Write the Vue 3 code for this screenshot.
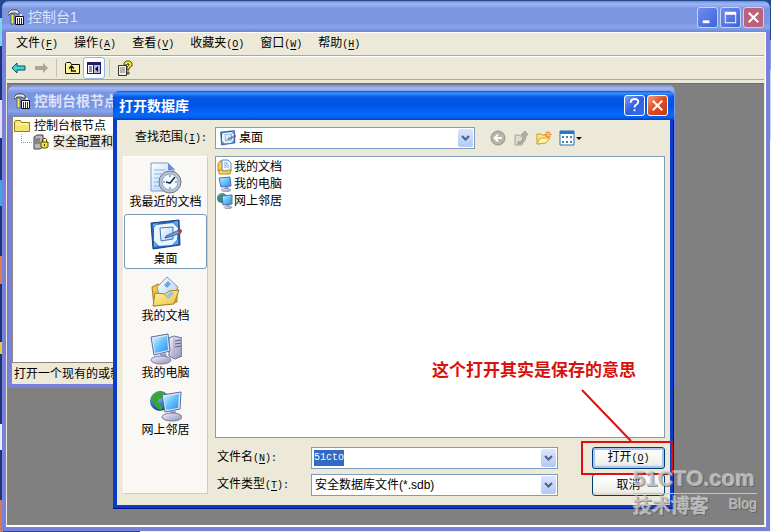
<template>
  <div class="desktop">
    <svg class="defs" aria-hidden="true">
      <defs>
        <linearGradient id="g-screen" x1="0" y1="0" x2="1" y2="1">
          <stop offset="0" stop-color="#d2f3ff" />
          <stop offset="0.5" stop-color="#62c2fb" />
          <stop offset="1" stop-color="#2f8ce8" />
        </linearGradient>
        <linearGradient id="g-folder" x1="0" y1="0" x2="1" y2="1">
          <stop offset="0" stop-color="#fff6a8" />
          <stop offset="1" stop-color="#efbf3a" />
        </linearGradient>
        <linearGradient id="g-metal" x1="0" y1="0" x2="1" y2="1">
          <stop offset="0" stop-color="#f6f6fc" />
          <stop offset="1" stop-color="#8c8cb8" />
        </linearGradient>
        <linearGradient id="g-paper" x1="0" y1="0" x2="1" y2="1">
          <stop offset="0" stop-color="#ffffff" />
          <stop offset="1" stop-color="#a9cdf5" />
        </linearGradient>
        <radialGradient id="g-globe" cx="0.4" cy="0.3" r="0.7">
          <stop offset="0" stop-color="#7fc4ff" />
          <stop offset="1" stop-color="#10409c" />
        </radialGradient>
      </defs>

      <symbol id="i-console" viewBox="0 0 16 16">
        <path d="M0 4 3 1h6l2 2v2H9L8 4H3L1 6H0z" fill="#e4e4e4" stroke="#222" stroke-width="0.7" />
        <path d="M3 5h3v10H3z" fill="#f4e84a" stroke="#444" stroke-width="0.7" />
        <path d="M7.500 7.500h8v8h-8z" fill="#fff" stroke="#111" />
        <path d="M9 15V9h1v6zM11 15V9h1v6zM13 15V9h1v6z" fill="#5a1430" />
        <path d="M12 5h2v2h-2z" fill="#e8e8e8" />
      </symbol>

      <symbol id="i-docs" viewBox="0 0 16 16">
        <path d="M1 5 3 2h4v12H3L1 12z" fill="#f5cf5c" stroke="#b98518" />
        <path d="M5 1h6l3 3v8H5z" fill="#f4faff" stroke="#5586bd" />
        <path d="M7 4h4M7 6h5M7 8h5" stroke="#7fa9d8" fill="none" />
        <path d="M2 15v-4h3v1h6v-1h3l-1 4z" fill="url(#g-folder)" stroke="#b98518" />
      </symbol>

      <symbol id="i-pc" viewBox="0 0 16 16">
        <path d="m2 2 11-1 1 9-10 1z" fill="url(#g-screen)" stroke="#4a6fa8" />
        <path d="M8 11h3l1 2H7z" fill="#9a9ac4" />
        <ellipse cx="9" cy="14" rx="5" ry="1.6" fill="url(#g-metal)" stroke="#8585a8" stroke-width="0.6" />
      </symbol>

      <symbol id="i-net" viewBox="0 0 16 16">
        <circle cx="5" cy="5" r="5" fill="url(#g-globe)" />
        <path d="M1 5c1-3 4-4 5-4l1 3-3 2 1 3H3z" fill="#2fa040" />
        <path d="m5 3 10-1v9l-9 1z" fill="url(#g-screen)" stroke="#4a6fa8" />
        <path d="M10 12h2l1 1H9z" fill="#9a9ac4" />
        <ellipse cx="11" cy="14.3" rx="4" ry="1.4" fill="url(#g-metal)" stroke="#8585a8" stroke-width="0.6" />
      </symbol>

      <symbol id="i-desk" viewBox="0 0 32 32">
        <path d="m1 4 28-3 1 25-27 4z" fill="#2c66b8" stroke="#1c3f80" />
        <path d="m6 6 17-2 5 5-1 12-5 5-13 1-5-5V9z" fill="#e6f7fb" />
        <path d="m23 3 5-1v6zM3 9V5l5-1zM28 20v5l-6 1zM4 22l4 5-4 1z" fill="#5ca8f0" />
        <path d="m10 9 13-1v12l-12 2z" fill="url(#g-paper)" stroke="#3f78bb" />
        <path d="m16 17 13-6 2 3-12 4-4 1z" fill="#6fa4dd" stroke="#234f8e" stroke-width="0.8" />
        <circle cx="30" cy="12" r="2" fill="#c93a24" />
      </symbol>

      <symbol id="i-recent" viewBox="0 0 32 32">
        <path d="M1 1h17l6 6v22H1z" fill="url(#g-paper)" stroke="#7b9cc8" />
        <path d="M18 1v7h6z" fill="#5c92da" />
        <path d="M4 8h11M4 12h8M4 16h6M4 20h5M4 24h6" stroke="#8ab4e4" fill="none" />
        <circle cx="20" cy="20" r="11" fill="#b9c3d3" stroke="#6d7788" />
        <circle cx="20" cy="20" r="8" fill="#eefaff" stroke="#8fa6c0" />
        <path d="M20 13v2M20 25v2M13 20h2M25 20h2" stroke="#4b6480" />
        <path d="m25 15-5 6-4-1" fill="none" stroke="#1c2f4c" stroke-width="1.6" />
      </symbol>

      <symbol id="i-folder" viewBox="0 0 32 32">
        <path d="m2 11 6-3 5 3 14 1v14L4 30z" fill="#f2c646" stroke="#a97f1e" />
        <path d="M7 11 17 1l11 10-6 14-12-2z" fill="url(#g-paper)" stroke="#6f9ccc" />
        <path d="m14 9 4-4 3 3-4 4z" fill="#3f86cf" opacity="0.7" />
        <path d="m3 30 2-13 10 1 4-3 10-1-5 14z" fill="url(#g-folder)" stroke="#a97f1e" />
        <path d="m14 19 4 4 6-5-3-3-4 4z" fill="#82bdf0" opacity="0.8" />
      </symbol>

      <symbol id="i-computer" viewBox="0 0 32 32">
        <path d="m19 5 5-2 8 2v18l-7 3-6-3z" fill="url(#g-metal)" stroke="#6a6a98" />
        <path d="m25 8 6-1M25 11l6-1M25 14l6-1" stroke="#59598c" fill="none" />
        <path d="M24 5v20" stroke="#a6a6cc" fill="none" />
        <path d="m1 4 17-3 2 17-16 4z" fill="#dfe6f6" stroke="#5b6f9e" />
        <path d="m3 6 14-3 1 14-13 3z" fill="url(#g-screen)" />
        <path d="m10 21 6-1 1 5h-6z" fill="#9c9cc6" />
        <ellipse cx="11" cy="27" rx="10" ry="4" fill="url(#g-metal)" stroke="#7c7ca6" />
      </symbol>

      <symbol id="i-network" viewBox="0 0 32 32">
        <circle cx="10" cy="11" r="10" fill="url(#g-globe)" />
        <path d="M1 9c2-5 6-8 10-8l4 2-3 5-4 2 1 4 4 2-2 5-5-4z" fill="#35a832" />
        <path d="m12 5 19-3-1 17-15 3z" fill="#dfe6f6" stroke="#5b6f9e" />
        <path d="m14 7 15-3-1 14-12 2z" fill="url(#g-screen)" />
        <path d="m20 21 5-1 2 5h-7z" fill="#9c9cc6" />
        <ellipse cx="22" cy="27" rx="10" ry="4" fill="url(#g-metal)" stroke="#7c7ca6" />
      </symbol>
    </svg>

    <section class="window">
      <header class="title title--main">
        <svg class="ico16"><use href="#i-console" /></svg>
        <h1>控制台1</h1>
        <div class="caption">
          <button class="cap cap--dim" aria-label="最小化">
            <svg viewBox="0 0 20 20"><path d="M5 13h7v3H5z" fill="#fff" /></svg>
          </button>
          <button class="cap cap--dim" aria-label="最大化">
            <svg viewBox="0 0 20 20"><path d="M4 4h12v12H4zM5 7v8h10V7z" fill="#fff" fill-rule="evenodd" /></svg>
          </button>
          <button class="cap cap--dimclose" aria-label="关闭">
            <svg viewBox="0 0 20 20"><path d="m5 5 10 10M15 5 5 15" stroke="#fff" stroke-width="2.2" /></svg>
          </button>
        </div>
      </header>

      <div class="client">
        <nav class="menubar">
          <button v-for="m in menus" :key="m.key">
            {{ m.label }}<span class="mono">(<u>{{ m.key }}</u>)</span>
          </button>
        </nav>

        <div class="toolbar">
          <button aria-label="后退">
            <svg class="ico16" viewBox="0 0 16 16"><path d="m1 8 5-5v3h8v4H6v3z" fill="#3fd8d0" stroke="#0c4a50" /></svg>
          </button>
          <button aria-label="前进">
            <svg class="ico16" viewBox="0 0 16 16"><path d="m15 8-5-5v3H2v4h8v3z" fill="#aaa797" /></svg>
          </button>
          <span class="split"></span>
          <button aria-label="向上">
            <svg class="ico16" viewBox="0 0 16 16">
              <path d="M1.500 13.500v-10l1-1h4l1 2h8v9z" fill="#fff79a" stroke="#111" />
              <path d="M7.500 6v5H12M5 8.500 7.500 6 10 8.500" fill="none" stroke="#111" stroke-width="1.3" />
            </svg>
          </button>
          <button class="pressed" aria-label="显示/隐藏控制台树">
            <svg class="ico16" viewBox="0 0 16 16">
              <path d="M1 2h14v12H1z" fill="#1c1c6c" />
              <path d="M2 5h5v8H2z" fill="#fff" />
              <path d="M8 5h6v8H8z" fill="#b9b9e0" />
              <path d="M3 7h3M3 9h3M3 11h3" stroke="#1c1c6c" />
              <path d="m12 6-3 3 3 3z" fill="#111" />
            </svg>
          </button>
          <span class="split"></span>
          <button aria-label="帮助">
            <svg class="ico16" viewBox="0 0 16 16">
              <path d="M1.500 5.500h8v10h-8z" fill="#f3f1e2" stroke="#333" />
              <path d="M3 8h5M3 10h5M3 12h5" stroke="#777" />
              <path d="M7 5V3l2-2h4l2 2v3l-3 2v2h-2V7l2-2V4h-2v1z" fill="#f7e433" stroke="#222" stroke-width="0.8" />
              <path d="M10 12h2v2h-2z" fill="#f7e433" stroke="#222" stroke-width="0.8" />
            </svg>
          </button>
        </div>

        <main class="mdi">
          <section class="child">
            <header class="title title--child">
              <svg class="ico16"><use href="#i-console" /></svg>
              <h2>控制台根节点</h2>
            </header>
            <ul class="tree">
              <li>
                <svg class="ico16" viewBox="0 0 16 16">
                  <path d="M.5 13.500v-10l1-1h5l1 2h8v9z" fill="#f5e56a" stroke="#8f7d1e" />
                  <path d="M2 6h12" stroke="#fffbd8" />
                </svg>
                控制台根节点
              </li>
              <li class="leaf">
                <svg class="ico16" viewBox="0 0 16 16">
                  <path d="m1 3 3-2h6v12l-3 2H1z" fill="#b9b9b9" stroke="#444" />
                  <path d="M2 5h5M2 7h5M2 9h5" stroke="#555" />
                  <path d="M9.500 8V5.500l1-1h2l1 1V8" fill="none" stroke="#554a00" />
                  <path d="M8 8h7v5l-2 1h-3l-2-1z" fill="#f4e23a" stroke="#554a00" />
                  <path d="M11 10h1v2h-1z" fill="#333" />
                </svg>
                <span>安全配置和分析</span>
              </li>
            </ul>
            <footer class="status">打开一个现有的或新的数据库</footer>
          </section>

          <form class="dialog" @submit.prevent>
            <header class="title title--dialog">
              <h2>打开数据库</h2>
              <div class="caption">
                <button type="button" class="cap" aria-label="帮助">
                  <svg viewBox="0 0 20 20">
                    <path d="M6 7c0-5 8-5 8-1 0 3-4 3-4 6" fill="none" stroke="#fff" stroke-width="2" />
                    <path d="M9 14h2v2H9z" fill="#fff" />
                  </svg>
                </button>
                <button type="button" class="cap cap--close" aria-label="关闭">
                  <svg viewBox="0 0 20 20"><path d="m5 5 10 10M15 5 5 15" stroke="#fff" stroke-width="2.2" /></svg>
                </button>
              </div>
            </header>

            <div class="lookin">
              <label for="lookin">查找范围<span class="mono">(<u>I</u>):</span></label>
              <div class="combo combo--icon">
                <svg class="ico16"><use href="#i-desk" /></svg>
                <select id="lookin">
                  <option>桌面</option>
                </select>
                <span class="arrow"><svg viewBox="0 0 9 9"><path d="m1 2 3.500 3.500L8 2" /></svg></span>
              </div>
              <div class="tools">
                <button type="button" aria-label="转到上次访问的文件夹">
                  <svg class="ico16" viewBox="0 0 16 16">
                    <circle cx="8" cy="8" r="7" fill="#b5b4a9" stroke="#96958a" />
                    <path d="M12 8H5m3-3.500L4.500 8 8 11.500" fill="none" stroke="#fff" stroke-width="1.8" />
                  </svg>
                </button>
                <button type="button" aria-label="向上一级">
                  <svg class="ico16" viewBox="0 0 16 16">
                    <path d="M2 5h4l1 1h4l-2 9H2z" fill="#dcdbd0" stroke="#a5a498" />
                    <path d="M5 12c4 0 5-3 5-7H8l4-4 3 4h-2c0 6-3 9-8 9z" fill="#b3b2a8" stroke="#8f8e84" stroke-width="0.7" />
                  </svg>
                </button>
                <button type="button" aria-label="创建新文件夹">
                  <svg class="ico16" viewBox="0 0 16 16">
                    <path d="M1 14V4h4l1 1h6v5l-3 3z" fill="#ffe680" stroke="#c99a2c" />
                    <path d="m1 14 3-6h10l-4 5z" fill="#fff3a8" stroke="#d6a634" />
                    <path d="M12 1v7M8.500 4.500h7M9.500 2l5 5M14.500 2l-5 5" stroke="#e8681c" />
                    <circle cx="12" cy="4.500" r="1.500" fill="#ffd23c" />
                  </svg>
                </button>
                <button type="button" class="views" aria-label="查看菜单">
                  <svg viewBox="0 0 24 16">
                    <path d="M1 1h14v14H1z" fill="#fff" stroke="#2a6fb5" />
                    <path d="M1 1h14v3H1z" fill="#2478c8" />
                    <path d="M3 6h2v2H3zM11 6h2v2h-2zM7 11h2v2H7z" fill="#3c7fb8" />
                    <path d="M7 6h2v2H7zM3 11h2v2H3zM11 11h2v2h-2z" fill="#56867c" />
                    <path d="M17 7h6l-3 3z" fill="#111" />
                  </svg>
                </button>
              </div>
            </div>

            <div class="content">
              <nav class="places">
                <button
                  v-for="p in places"
                  :key="p.icon"
                  type="button"
                  :class="{ active: p.icon === place }"
                  @click="place = p.icon"
                >
                  <svg><use :href="'#' + p.icon" /></svg>
                  {{ p.label }}
                </button>
              </nav>

              <div class="pane">
                <ul class="files">
                  <li v-for="f in files" :key="f.icon">
                    <svg class="ico16"><use :href="'#' + f.icon" /></svg>
                    {{ f.label }}
                  </li>
                </ul>
                <div class="fields">
                  <div class="row">
                    <label for="fname">文件名<span class="mono">(<u>N</u>):</span></label>
                    <div class="combo">
                      <input id="fname" ref="nameInput" v-model="fileName" class="mono" type="text" />
                      <span class="arrow"><svg viewBox="0 0 9 9"><path d="m1 2 3.500 3.500L8 2" /></svg></span>
                    </div>
                    <button type="submit" class="btn btn--default">
                      打开<span class="mono">(<u>O</u>)</span>
                    </button>
                  </div>
                  <div class="row">
                    <label for="ftype">文件类型<span class="mono">(<u>T</u>):</span></label>
                    <div class="combo">
                      <select id="ftype">
                        <option>安全数据库文件(*.sdb)</option>
                      </select>
                      <span class="arrow"><svg viewBox="0 0 9 9"><path d="m1 2 3.500 3.500L8 2" /></svg></span>
                    </div>
                    <button type="button" class="btn">取消</button>
                  </div>
                </div>
              </div>
            </div>

            <div class="note">
              <p>这个打开其实是保存的意思</p>
              <svg viewBox="0 0 94 88">
                <path d="m2 1 49 51" />
                <path d="M2 53h90v32H2z" />
              </svg>
            </div>
          </form>

          <div class="brand">
            <strong>51CTO.com</strong>
            <div><b>技术博客</b><i>Blog</i></div>
          </div>
        </main>
      </div>
    </section>
  </div>
</template>

<script setup>
import { onMounted, ref } from "vue";

const menus = [
  { label: "文件", key: "F" },
  { label: "操作", key: "A" },
  { label: "查看", key: "V" },
  { label: "收藏夹", key: "O" },
  { label: "窗口", key: "W" },
  { label: "帮助", key: "H" },
];

const places = [
  { label: "我最近的文档", icon: "i-recent" },
  { label: "桌面", icon: "i-desk" },
  { label: "我的文档", icon: "i-folder" },
  { label: "我的电脑", icon: "i-computer" },
  { label: "网上邻居", icon: "i-network" },
];

const files = [
  { label: "我的文档", icon: "i-docs" },
  { label: "我的电脑", icon: "i-pc" },
  { label: "网上邻居", icon: "i-net" },
];

const place = ref("i-desk");
const fileName = ref("51cto");
const nameInput = ref(null);

onMounted(() => {
  nameInput.value.focus();
  nameInput.value.select();
});
</script>

<style>
body {
  margin: 0;
}
</style>

<style scoped>
.desktop {
  --face: #ece9d8;
  --line: #aca899;
  --edge: #7f9db9;

  box-sizing: border-box;
  display: flex;
  min-height: 100vh;
  padding: 1px 1px 1px 2px;
  font: 12px/16px "Liberation Sans", "Noto Sans CJK SC", sans-serif;
  color: #000;
  background:
    linear-gradient(#234a8c 0 40px, #8a9cf0 40px 70px, #c4d4fa 70px 140px, #f4f8ff 140px) right / 3px 100% no-repeat,
    linear-gradient(#234a8c 0 18px, #7fd4f4 18px 46px, #1c3578 46px 100px, #e4dcf8 100px 138px, #1c3578 138px 180px, #38a8e8 180px 206px, #1c3578 206px 256px, #e07a50 256px 284px, #1c3578 284px 342px, #f0c43c 342px 354px, #1c3578 354px 424px, #e8ecff 424px 450px, #1c3578 450px 500px, #d07c50 500px) left / 3px 100% no-repeat,
    linear-gradient(90deg, #234a8c 0 140px, #e8eefc 140px) bottom / 100% 3px no-repeat,
    #234a8c;
}

.defs {
  position: absolute;
  width: 0;
  height: 0;
}

h1,
h2,
p,
ul {
  margin: 0;
  padding: 0;
  font: inherit;
  list-style: none;
}

button,
input,
select {
  margin: 0;
  padding: 0;
  border: 0;
  border-radius: 0;
  outline: 0;
  background: none;
  color: inherit;
  font: inherit;
  appearance: none;
}

svg {
  display: block;
  flex: none;
}

.ico16 {
  width: 16px;
  height: 16px;
}

.mono {
  font-family: "Liberation Mono", "Noto Sans CJK SC", monospace;
  font-size: 10px;
}

.mono u {
  text-underline-offset: 2px;
}

/* windows */
.window {
  flex: 1;
  min-width: 0;
  display: flex;
  flex-direction: column;
  padding: 0 4px 4px;
  border-radius: 7px 7px 0 0;
  background: #7880dc;
}

.title {
  display: flex;
  align-items: center;
  color: #fff;
  font-size: 14px;
}

.title--main,
.title--child {
  margin: 0 -4px;
  padding: 0 6px;
  gap: 4px;
  color: #dbe4fb;
  background: linear-gradient(#6f8cdc, #a0b8f4 3px, #7a94e0 8px, #7c96e2 22px, #86a6ec 26px, #6f86d4);
}

.title--main {
  height: 30px;
  padding-top: 1px;
  border-radius: 7px 7px 0 0;
}

.caption {
  display: flex;
  gap: 2px;
  margin-left: auto;
}

.cap {
  box-sizing: border-box;
  width: 21px;
  height: 21px;
  border: 1px solid #fff;
  border-radius: 3px;
  background: linear-gradient(135deg, #7f9ef4, #2f60e0 50%, #3a6eec);
}

.cap svg {
  width: 19px;
  height: 19px;
}

.cap--dim {
  border-color: #c6d2f6;
  background: linear-gradient(135deg, #6f8cee, #3f64d8);
}

.cap--dimclose {
  border-color: #dccbe4;
  background: #b8627c;
}

.cap--close {
  background: linear-gradient(135deg, #f09a80, #dc4c22 50%, #c83a12);
}

.client {
  flex: 1;
  display: flex;
  flex-direction: column;
  padding: 0 1px;
  background: var(--face);
  border-right: 1px solid #fff;
  border-bottom: 2px solid #fff;
}

.menubar,
.toolbar {
  box-sizing: border-box;
  display: flex;
  height: 24px;
  padding: 0 1px;
  border-top: 1px solid #fff;
  border-bottom: 1px solid var(--line);
}

.menubar button {
  padding: 0 8px;
}

.toolbar {
  align-items: center;
  margin-bottom: 3px;
}

.toolbar button {
  padding: 2px;
  border: 1px solid transparent;
  border-radius: 3px;
}

.toolbar .pressed {
  border-color: #98b5e2;
  background: #fff;
}

.split {
  width: 1px;
  height: 18px;
  margin: 0 4px;
  background: #c5c2b2;
}

.mdi {
  flex: 1;
  position: relative;
  overflow: hidden;
  border-top: 1px solid #716f64;
  background: #808080;
}

/* console tree window */
.child {
  position: absolute;
  top: 1px;
  left: 1px;
  right: 89px;
  display: flex;
  flex-direction: column;
  padding: 0 4px 4px;
  border-radius: 7px 7px 0 0;
  background: #7880dc;
}

.title--child {
  height: 31px;
  border-radius: 7px 7px 0 0;
}

.title--child h2,
.title--dialog h2 {
  font-weight: 700;
}

.tree {
  height: 244px;
  padding-top: 1px;
  border: 1px solid #8a8878;
  background: #fff;
}

.tree li {
  display: flex;
  align-items: center;
  gap: 4px;
  padding-left: 1px;
}

.tree .leaf {
  position: relative;
  padding-left: 20px;
}

.tree .leaf::before {
  content: "";
  position: absolute;
  left: 8px;
  top: 0;
  width: 12px;
  height: 8px;
  border-left: 1px dotted #999;
  border-bottom: 1px dotted #999;
}

.leaf span {
  background: var(--face);
}

.status {
  height: 16px;
  padding: 3px 2px 2px;
  white-space: nowrap;
  background: var(--face);
}

/* open dialog */
.dialog {
  position: absolute;
  top: 7px;
  left: 106px;
  right: 90px;
  padding: 0 4px 4px;
  border-radius: 7px 7px 0 0;
  background: #0a3cc8;
  box-shadow: inset 0 -1px #00138c, inset -1px 0 #00138c;
}

.title--dialog {
  height: 29px;
  margin: 0 -4px;
  padding: 0 6px;
  border-radius: 7px 7px 0 0;
  background: linear-gradient(#0a50d8, #3c90ff 2px, #0458e4 6px, #0054e4 14px, #0668fc 23px, #0462f4 26px, #0342c0);
}

.lookin {
  display: flex;
  align-items: center;
  height: 36px;
  padding-right: 5px;
  background: var(--face);
}

.lookin label {
  width: 80px;
  padding-left: 18px;
}

.lookin .combo {
  flex: 261 1 0;
}

.tools {
  flex: 180 1 0;
  display: flex;
  gap: 7px;
  padding-left: 15px;
}

.views svg {
  width: 24px;
  height: 16px;
}

.content {
  display: flex;
  gap: 7px;
  padding: 0 5px 9px 6px;
  background: var(--face);
}

.places {
  box-sizing: border-box;
  width: 85px;
  display: flex;
  flex-direction: column;
  gap: 2px;
  margin-bottom: 2px;
  border: 1px solid #fff;
  border-right-color: #cfccbb;
  border-bottom-color: #cfccbb;
  background: #f9f8f4;
}

.places button {
  box-sizing: border-box;
  height: 55px;
  display: flex;
  flex-direction: column;
  align-items: center;
  padding-top: 4px;
  border: 1px solid transparent;
  border-radius: 3px;
}

.places .active {
  border-color: #7a98ba;
  background: #fff;
}

.places svg {
  width: 32px;
  height: 32px;
}

.pane {
  flex: 1;
  min-width: 0;
}

.files {
  box-sizing: border-box;
  height: 282px;
  padding: 1px;
  border: 1px solid var(--edge);
  background: #fff;
}

.files li {
  display: flex;
  align-items: center;
  gap: 1px;
  height: 17px;
}

.fields {
  display: grid;
  gap: 5px;
  padding-top: 9px;
}

.row {
  display: flex;
  align-items: center;
}

.row label {
  width: 94px;
  padding-left: 2px;
}

.row .combo {
  flex: 1;
}

.combo {
  box-sizing: border-box;
  display: flex;
  align-items: center;
  position: relative;
  height: 22px;
  border: 1px solid var(--edge);
  background: #fff;
}

.combo select,
.combo input {
  flex: 1;
  min-width: 0;
  padding: 0 20px 0 3px;
}

.combo input {
  padding-left: 2px;
}

.combo input::selection {
  color: #fff;
  background: #316ac5;
}

.combo--icon {
  padding-left: 4px;
}

.arrow {
  position: absolute;
  top: 1px;
  right: 1px;
  bottom: 1px;
  width: 15px;
  display: grid;
  place-items: center;
  border-radius: 2px;
  background: linear-gradient(#dbe6fe, #b4c8f6);
  pointer-events: none;
}

.arrow svg {
  width: 9px;
  height: 9px;
}

.arrow path {
  fill: none;
  stroke: #4d6185;
  stroke-width: 2;
}

.btn {
  box-sizing: border-box;
  width: 73px;
  height: 22px;
  margin-left: 34px;
  border: 1px solid #003c74;
  border-radius: 3px;
  background: linear-gradient(#fff, #f0f0ea 80%, #dcd6cc);
}

.btn--default {
  box-shadow: inset 0 0 0 2px #a9c4ee;
}

/* red callout over the dialog */
.note {
  position: absolute;
  right: 0;
  bottom: 32px;
  display: flex;
  flex-direction: column;
  align-items: flex-end;
  pointer-events: none;
}

.note p {
  margin: 0 38px 6px 0;
  color: #d8120c;
  font-size: 17px;
  font-weight: 700;
  line-height: 24px;
}

.note svg {
  width: 94px;
  height: 88px;
}

.note path {
  fill: none;
  stroke: #dc1010;
  stroke-width: 2;
}

.brand {
  position: absolute;
  right: 7px;
  bottom: 5px;
  width: 124px;
  color: rgba(200, 200, 200, 0.8);
  text-shadow: 1px 1px rgba(80, 80, 80, 0.6), -1px -1px rgba(225, 225, 225, 0.5);
  pointer-events: none;
}

.brand strong {
  display: block;
  border-bottom: 1px solid #c4c4c4;
  font: 700 22px/28px "Liberation Sans", sans-serif;
}

.brand div {
  display: flex;
  justify-content: space-between;
  font-size: 14px;
}

.brand b {
  font-size: 19px;
  line-height: 26px;
}

.brand i {
  font-style: normal;
  line-height: 20px;
}
</style>
